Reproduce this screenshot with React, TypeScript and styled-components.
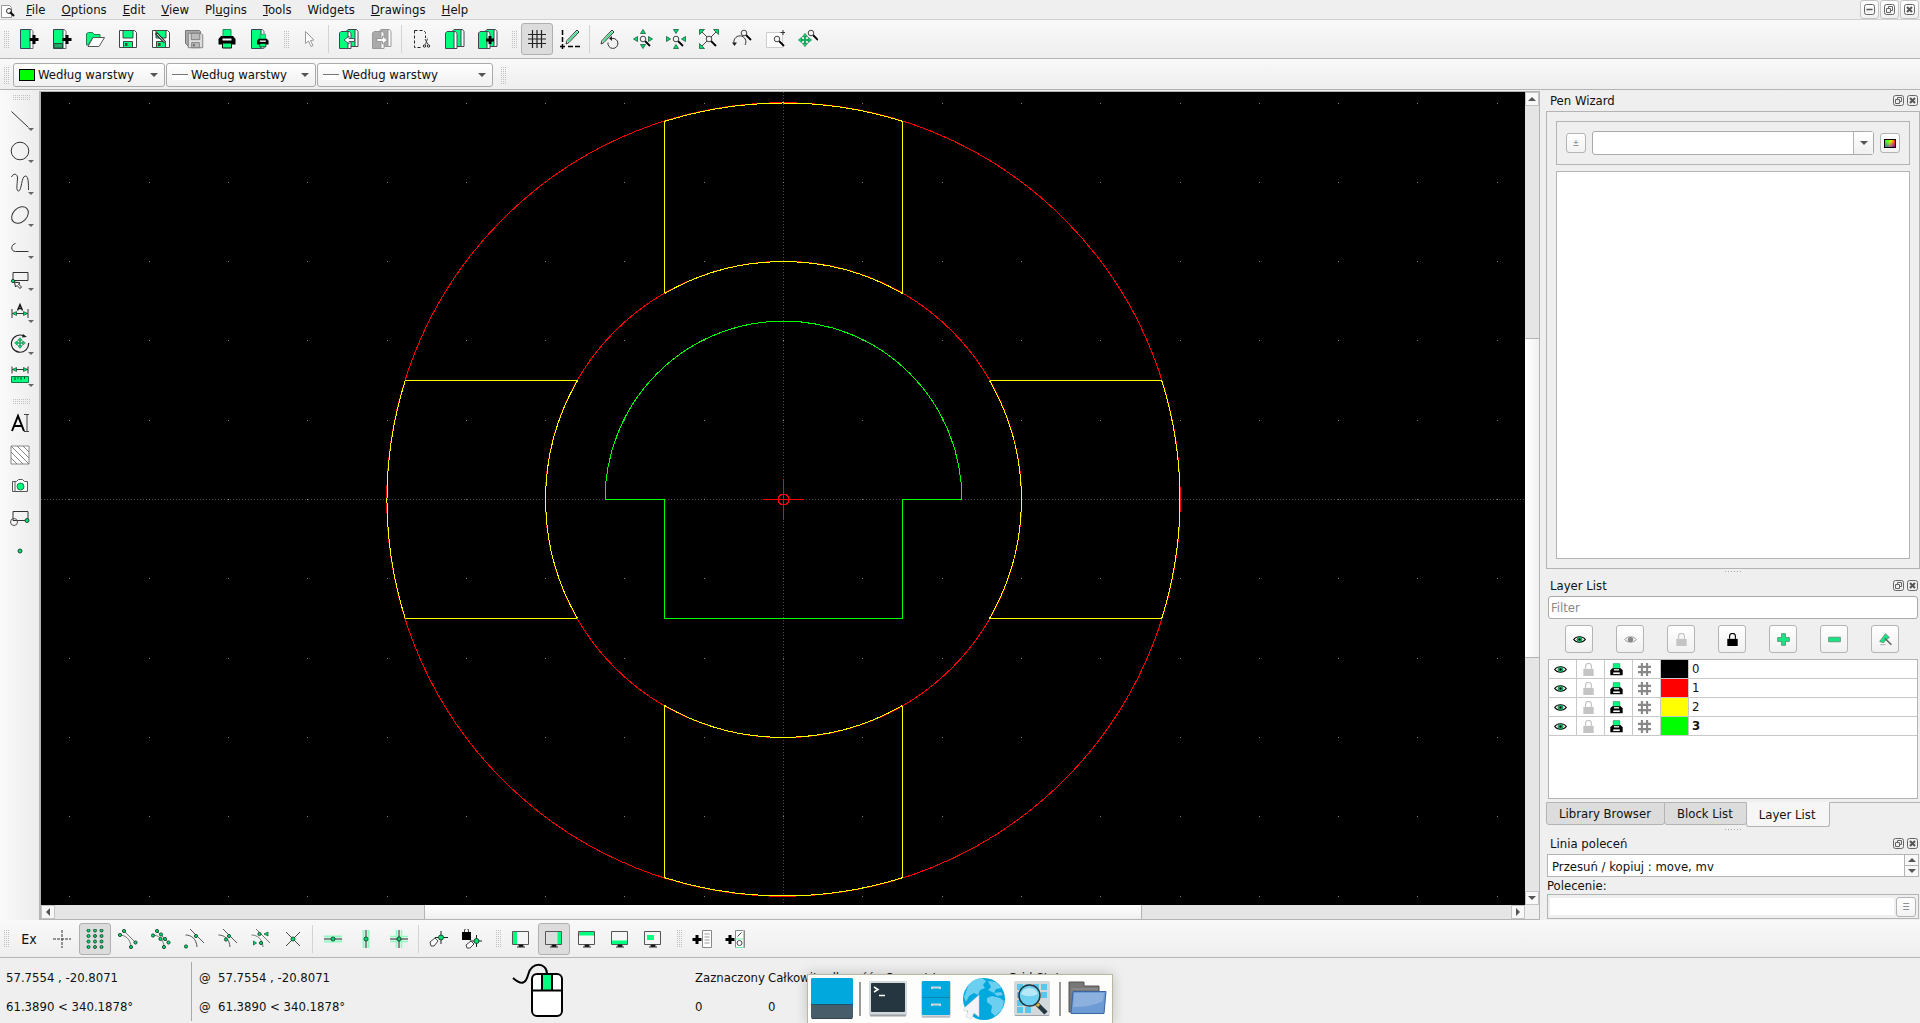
import React from 'react';
import styled, { createGlobalStyle, css } from 'styled-components';

const GREEN = '#00ff7f';
const LINE = '#b4b4b4';
const INK = '#333';

const GlobalStyle = createGlobalStyle`
  * { box-sizing: border-box; }
  body {
    margin: 0;
    background: #efefef;
    color: #111;
    font: 13px/16px "DejaVu Sans Condensed", "DejaVu Sans", sans-serif;
  }
  button, input, select, textarea { font: inherit; color: inherit; margin: 0; }
`;

/* ---------- icons ---------- */

const Svg = styled.svg<{ $s?: number }>`
  display: block;
  flex: none;
  width: ${p => p.$s ?? 20}px;
  height: ${p => p.$s ?? 20}px;
  fill: none;
`;

const Dot = ({ x, y, r = 1.6 }: { x: number; y: number; r?: number }) => (
  <circle cx={x} cy={y} r={r} fill="#00e070" stroke="#14402a" strokeWidth="0.9" />
);

const Tri = ({ d }: { d: string }) => <path d={d} fill="#00e070" stroke="#1d5c3c" strokeWidth="0.8" />;

const Loupe = ({ x, y }: { x: number; y: number }) => (
  <g>
    <path d={`M${x + 2} ${y + 2}l5 5`} stroke="#000" strokeWidth="1.8" />
    <circle cx={x} cy={y} r="2.8" fill="#f4f4f4" stroke="#444" />
  </g>
);

const Floppy = ({ main, page, ink }: { main: string; page: string; ink: string }) => (
  <g>
    <path d="M1.5 1.5h15l2 2v15h-17z" fill={page} stroke={ink} />
    <path d="M5 1.5h10V9H5z" fill={main} stroke={ink} />
    <path d="M5.5 12.5h9v6h-9z" fill={main} stroke={ink} />
    <path d="M7 14h2.5v3H7z" fill={ink} />
  </g>
);

const Book = ({ x, y, main = GREEN, ink = '#445' }: { x: number; y: number; main?: string; ink?: string }) => (
  <g transform={`translate(${x} ${y})`}>
    <path d="M7 .5h3.5l1.5 2v15H8z" fill="#fff" stroke={ink} />
    <path d="M.5 2l1.5-1.500h7v17H.5z" fill={main} stroke={ink} />
  </g>
);

const WideBook = () => (
  <g>
    <path d="M9 .5h3.500l1.500 2v17H10z" fill="#fff" stroke="#667" />
    <path d="M1.500.5h9.500v19h-9.500z" fill={GREEN} stroke="#345" />
  </g>
);

const Printer = () => (
  <g>
    <path d="M6 .5h8V8H6z" fill={GREEN} stroke="#1f8d59" />
    <path d="M4 7h12l2.500 3v5.500h-17V10z" fill="#000" />
    <path d="M5.500 10.500h9" stroke="#fff" strokeWidth="2" />
    <path d="M5.500 14h9v5h-9z" fill={GREEN} stroke="#000" />
  </g>
);

const Pencil = () => (
  <g>
    <path d="M6 15l1-3.500L17 1l2 2L9 13.500z" fill="#fff" stroke={INK} />
    <path d="M8 12.500L17.500 2.500" stroke="#3be08a" strokeWidth="1.600" />
  </g>
);

const Monitor = ({ children, bg = '#f6f6f6' }: { children: React.ReactNode; bg?: string }) => (
  <g>
    <path d="M1.500 2.500h16v13h-16z" fill={bg} stroke="#555" />
    {children}
    <path d="M8 16h4v1.500H8zM6 18h8" fill="#000" stroke="#222" />
  </g>
);

const Plus = ({ x, y, s = 4 }: { x: number; y: number; s?: number }) => (
  <path d={`M${x - s} ${y}h${2 * s}M${x} ${y - s}v${2 * s}`} stroke="#000" strokeWidth="3" />
);

const MoveCross = ({ x, y, s }: { x: number; y: number; s: number }) => (
  <g transform={`translate(${x} ${y}) scale(${s})`}>
    <path d="M0 -4V4M-4 0H4" stroke="#1fa865" strokeWidth="1.800" />
    <path d="M0 -6L2.400 -3H-2.400zM0 6L2.400 3H-2.400zM-6 0L-3 2.400V-2.400zM6 0L3 2.400V-2.400z" fill="#12d873" stroke="#17774a" strokeWidth="0.600" />
  </g>
);

const ICONS: Record<string, React.ReactNode> = {
  new: <><WideBook /><Plus x={15} y={10.5} s={4.5} /></>,
  newTemplate: <><WideBook /><path d="M2 14.500h8.500v4.500H2z" fill="#22a866" stroke="#2b4a3c" /><Plus x={15} y={10.5} s={4.5} /></>,
  open: <><path d="M1.500 16V4.500l2-1h4l1.500 2h6V9H7.500L3 16z" fill={GREEN} stroke="#2a7a52" /><path d="M8 8.500h11.500L14 17.500H3z" fill="#fff" stroke="#555" /></>,
  save: <Floppy main={GREEN} page="#fff" ink="#444" />,
  saveAs: <><Floppy main={GREEN} page="#fff" ink="#444" /><path d="M5 4l9 9.500" stroke="#333" strokeWidth="3" /><path d="M6 5l8 8.500" stroke="#ddd" /></>,
  saveAll: <><path d="M1.500 1.500h14l1 1v15h-12l-3-3z" fill="#aaa" stroke="#777" /><g transform="translate(3 3) scale(.85)"><Floppy main="#bbb" page="#ddd" ink="#777" /></g></>,
  print: <Printer />,
  printPreview: <><WideBook /><g transform="translate(6 5) scale(.68)"><Printer /></g></>,
  pointer: <path d="M6.500 2.500v12l3-2.500 2.500 5.500 2-1-2.500-5 3.500-.5z" fill="#fff" stroke="#999" />,
  undo: <><Book x={7} y={0} /><Book x={0} y={2} /><path d="M5 11l5-4v2.500h5.500v3H10V15z" fill="#fff" stroke="#456" /></>,
  redo: <><Book x={7} y={0} main="#aaa" ink="#999" /><Book x={0} y={2} main="#aaa" ink="#999" /><path d="M15.500 11l-5-4v2.500H5v3h5.500V15z" fill="#fff" stroke="#999" /></>,
  cut: <><path d="M2.500 1.500h9l2 2V9M2.500 1.500v17h8" stroke="#222" strokeDasharray="3 2" /><path d="M15.500 9.500l-2 6M13 10l3 5.500" stroke="#444" /><circle cx="12.500" cy="17" r="1.200" stroke="#222" /><circle cx="16.500" cy="17" r="1.200" stroke="#222" /></>,
  copy: <><Book x={7} y={0} /><Book x={0} y={2} /></>,
  paste: <><Book x={7} y={0} /><Book x={0} y={2} /><Plus x={12} y={11} /></>,
  grid: <path d="M5.500 1v18M10 1v18M14.500 1v18M1 5.500h18M1 10h18M1 14.500h18" stroke="#222" strokeWidth="1.200" />,
  draft: <><path d="M2.500 1v13" stroke="#000" strokeWidth="1.500" strokeDasharray="5 2" /><path d="M0 17.500h5M2.500 15v5M8 17.500h12" stroke="#000" strokeWidth="1.500" strokeDasharray="5 2" /><Pencil /></>,
  redraw: <><g transform="translate(-5 0)"><Pencil /></g><path d="M12 9.500a5 5 0 1 1-4 4" stroke="#333" /><path d="M12 7v5l-3-2.500z" fill="#222" /></>,
  zoomIn: <><Tri d="M10 .5l2.500 4h-5z" /><Tri d="M10 19.500l2.500-4h-5z" /><Tri d="M.5 10l4-2.500v5z" /><Tri d="M19.500 10l-4-2.500v5z" /><Loupe x={10} y={10} /></>,
  zoomOut: <><Tri d="M10 4.500l2.500-4h-5z" /><Tri d="M10 15.500l2.500 4h-5z" /><Tri d="M4.500 10l-4-2.500v5z" /><Tri d="M15.500 10l4-2.500v5z" /><Loupe x={10} y={10} /></>,
  zoomAuto: <><path d="M3 3l7 7M17 3L3 17" stroke="#444" /><Tri d="M.5.5h5l-5 5z" /><Tri d="M19.500.5h-5l5 5z" /><Tri d="M.5 19.500v-5l5 5z" /><Loupe x={10} y={10} /></>,
  zoomPrev: <><path d="M2.500 15.500A6 6 0 1 1 13 16" stroke="#333" /><path d="M0 13.500h5L2.500 17z" fill="#222" /><Loupe x={12} y={4} /></>,
  zoomWindow: <><path d="M1.500 3.500h16v15h-16z" fill="#fff" stroke="#ccc" /><path d="M18 1v5M15.500 3.500h5" stroke="#333" /><Loupe x={12} y={10} /></>,
  zoomPan: <><MoveCross x={7} y={11} s={1.1} /><Loupe x={13} y={4} /></>,
  line: <path d="M1.500 2.500l17 16" stroke={INK} />,
  circle: <circle cx="10" cy="10" r="8.800" stroke={INK} />,
  curve: <path d="M1.500 4C3 0 8 0 7.500 6 7 12 6 18 8.500 18 12 18 11 3 15.500 3c3 0 3 8 3 14" stroke={INK} />,
  ellipse: <ellipse cx="10" cy="10" rx="9.500" ry="7" transform="rotate(-45 10 10)" stroke={INK} />,
  polyline: <path d="M5.500 6.500c-5 1-5 8 0 8h13" stroke={INK} />,
  select: <><path d="M3 3.500h15v8H3z" stroke={INK} /><Dot x={3} y={12} /><path d="M4.500 13l1 5 1.500-1.500 3 3 1.500-1.500-3-3 1.500-1z" fill="#fff" stroke="#222" /></>,
  dimension: <><path d="M2 8v9M18 8v9M2 12.500h16" stroke={INK} /><Tri d="M2.500 12.500l4-2v4z" /><Tri d="M17.500 12.500l-4-2v4z" /><path d="M7.500 9.500L10 3.500l2.500 6M8.500 7.500h3" stroke="#111" strokeWidth="1.400" /></>,
  modify: <><path d="M18.600 10A8.600 8.600 0 1 1 14 3" stroke="#222" strokeWidth="1.200" /><path d="M13 1l4 3-5 .5z" fill="#222" /><MoveCross x={10} y={10} s={0.9} /></>,
  measure: <><path d="M2 1.500v7M18 1.500v7M2 4.500h16" stroke={INK} /><Tri d="M2.500 4.500l4-2v4z" /><Tri d="M17.500 4.500l-4-2v4z" /><path d="M1.500 11.500h17v6h-17z" fill={GREEN} stroke="#117744" /><path d="M5 12v3M8 12v2M11 12v3M14.500 12v2" stroke="#0a4a2a" /></>,
  text: <><path d="M2 18L8 3l6 15M4 13h8" stroke="#000" strokeWidth="2" /><path d="M17 2v16M14 1.500h5M14 18.500h5" stroke="#444" /></>,
  hatch: <><path d="M1 1h18v18H1z" fill="#fff" stroke="#888" /><path d="M1 13l6 6M1 7l12 12M1 1l18 18M7 1l12 12M13 1l6 6" stroke="#777" strokeWidth=".9" /></>,
  image: <><path d="M2.500 4.500h4l2-2h4l2 2h3v10h-15zM5 4v10" fill="#fff" stroke="#555" /><circle cx="10.500" cy="9.500" r="3.500" fill={GREEN} stroke="#1b7a4b" /></>,
  block: <><path d="M3 2.500h15v9H3z" stroke={INK} /><circle cx="4" cy="13" r="3.500" stroke="#555" /><Dot x={17} y={11.5} r={2} /></>,
  point: <Dot x={10} y={10} r={2} />,
  snapFree: <path d="M10 1v18M1 10h18" stroke="#333" strokeDasharray="3 1" />,
  snapGrid: <>{[3.5, 10, 16.5].map(x => [1.5, 7, 12.5, 18].map(y => <Dot key={`${x}-${y}`} x={x} y={y} r={1.5} />))}</>,
  snapEnd: <><path d="M1.500 6c6 0 11 4 11.500 12M6 2l11 11" stroke="#777" /><Dot x={2} y={6} /><Dot x={6} y={2} /><Dot x={17.5} y={13.5} /><Dot x={13} y={18} /></>,
  snapEntity: <><path d="M1.500 6c6 0 11 4 11.500 12M6 2l11 11" stroke="#777" /><Dot x={2} y={6.5} /><Dot x={6} y={2} /><Dot x={10} y={5.5} /><Dot x={9.5} y={10} /><Dot x={14} y={10} /><Dot x={17.5} y={13.5} /><Dot x={13} y={18} /></>,
  snapCenter: <><path d="M1.500 6c6 0 11 4 11.500 12M6 0l14 14" stroke="#555" /><Dot x={12} y={7} /><Dot x={2} y={17.5} /></>,
  snapMiddle: <><path d="M1.500 6c6 0 11 4 11.500 12M6 0l14 14" stroke="#555" /><Dot x={12} y={7} /><Dot x={9} y={10.5} /></>,
  snapDist: <><path d="M1.500 6c6 0 11 4 11.500 12M6 0l14 14" stroke="#777" /><Dot x={9.5} y={5} /><Dot x={11} y={14} /><Tri d="M14 5l4-2v4z" /><Tri d="M6.500 14l-3-2v4z" /></>,
  snapCross: <><path d="M3 3l14 14M17 3L3 17" stroke="#444" /><Dot x={10} y={10} r={2} /></>,
  restrictH: <><path d="M1 7.500h18M1 12.500h18" stroke="#8dfac0" strokeWidth="2" /><path d="M1 10h18" stroke="#222" /><Dot x={10} y={10} r={2} /></>,
  restrictV: <><path d="M7.500 1v18M12.500 1v18" stroke="#8dfac0" strokeWidth="2" /><path d="M10 1v18" stroke="#222" /><Dot x={10} y={10} r={2} /></>,
  restrictO: <><path d="M7.500 1v18M12.500 1v18M1 7.500h18M1 12.500h18" stroke="#8dfac0" strokeWidth="1.500" /><path d="M10 1v18M1 10h18" stroke="#222" /><Dot x={10} y={10} r={2} /></>,
  relZero: <><path d="M12 2v13M6 8.500h13" stroke="#222" /><Dot x={12} y={8.5} r={2.5} /><path d="M1 13l5-4 3 3-4 5H2z" fill="#fff" stroke="#444" /></>,
  lockZero: <><path d="M0 3h9v8H0z" fill="#000" /><path d="M2.500 3V1.500a2 2 0 0 1 4 0V3" stroke="#333" /><path d="M14.500 6v12M8 12h13" stroke="#222" /><Dot x={14.5} y={12} r={2.5} /><path d="M4 16l5-4 3 3-4 4H5z" fill="#fff" stroke="#444" /></>,
  dockLeft: <Monitor><path d="M2 3h4v12H2z" fill={GREEN} /></Monitor>,
  dockRight: <Monitor bg="#ddd"><path d="M13.500 3h3.500v12h-3.500z" fill={GREEN} /></Monitor>,
  dockTop: <Monitor><path d="M2 3h15v3.500H2z" fill={GREEN} /></Monitor>,
  dockBottom: <Monitor><path d="M2 11.500h15V15H2z" fill={GREEN} /></Monitor>,
  dockFloat: <Monitor><path d="M4 6h7v5H4z" fill={GREEN} /></Monitor>,
  addMenu: <><Plus x={5} y={10.5} s={4.5} /><path d="M10.500 1.500h9v17h-9z" fill="#fff" stroke="#888" /><path d="M12.500 5h5M12.500 8h5M12.500 11h5M12.500 14h5" stroke="#999" /></>,
  addToolbar: <><Plus x={5} y={10.5} s={4.5} /><path d="M10.500 1.500h9v17h-9z" fill="#fff" stroke="#888" /><path d="M18.500 1v17.500h-8M10 10h9" stroke="#6cf2a9" /><path d="M12.500 7.500l4-4" stroke="#444" /><circle cx="14.500" cy="14" r="2.500" stroke="#444" /></>,
  eye: <><path d="M1 10c4-5.500 14-5.500 18 0-4 5.500-14 5.500-18 0z" fill="#fff" stroke="#000" strokeWidth="1.700" /><circle cx="10" cy="10" r="4" fill="#12d873" stroke="#0a5a33" /><circle cx="10" cy="10" r="1.800" fill="#000" /></>,
  eyeOff: <><path d="M1 10c4-5.500 14-5.500 18 0-4 5.500-14 5.500-18 0z" fill="#eee" stroke="#999" strokeWidth="1.500" /><circle cx="10" cy="10" r="4" fill="#888" /></>,
  unlock: <><path d="M2 9h16v11H2z" fill="#c4c4c4" /><path d="M5.500 9V5a4.500 4.500 0 0 1 9 0v4" stroke="#c4c4c4" strokeWidth="1.800" /></>,
  lock: <><path d="M2 9h16v11H2z" fill="#000" /><path d="M5.500 9V5a4.500 4.500 0 0 1 9 0v4" stroke="#000" strokeWidth="1.800" /></>,
  plus: <path d="M7 1h6v6h6v6h-6v6H7v-6H1V7h6z" fill="#16e682" stroke="#5d9c7c" strokeWidth="1.500" />,
  minus: <path d="M1 6.500h18v7H1z" fill="#16e682" stroke="#5d9c7c" strokeWidth="1.500" />,
  edit: <><path d="M1 13L10 1l6 6-6 4-3 4z" fill="#16e682" stroke="#4c7a63" /><path d="M9 8l10 10" stroke="#666" strokeWidth="2.500" /><path d="M2 18h8" stroke="#888" /></>,
  hash: <path d="M6 0v20M14 0v20M0 6h20M0 14h20" stroke="#888" strokeWidth="3.200" />,
  tinyPrint: <><path d="M5 1h10v9H5z" fill={GREEN} stroke="#1f8d59" /><path d="M3.500 8h13l3 3v8H.5v-8z" fill="#000" /><path d="M6 10.500h8" stroke="#fff" strokeWidth="2" /><path d="M5 14.500h10V17H5z" fill="#fff" /></>,
};

const Icon = ({ name, size }: { name: string; size?: number }) => (
  <Svg viewBox="0 0 20 20" $s={size} aria-hidden="true">{ICONS[name]}</Svg>
);

const Arrow = ({ dir = 'down' }: { dir?: 'up' | 'down' | 'left' | 'right' }) => {
  const paths = { up: 'M0 6l4-4 4 4z', down: 'M0 2h8L4 6z', left: 'M6 0v8L2 4z', right: 'M2 0v8l4-4z' };
  return <Svg viewBox="0 0 8 8" $s={8} aria-hidden="true"><path d={paths[dir]} fill="#555" /></Svg>;
};

/* ---------- window frame ---------- */

const Window = styled.div`
  display: flex;
  flex-direction: column;
  height: 100vh;
  overflow: hidden;
`;

const MenuBar = styled.nav`
  display: flex;
  align-items: center;
  height: 20px;
  flex: none;
  border-bottom: 1px solid #d0d0d0;
`;

const MenuItem = styled.button`
  border: 0;
  background: none;
  padding: 0 8px;
  height: 19px;
`;

const MenuLogo = styled.div`
  width: 18px;
`;

const WindowButtons = styled.div`
  display: flex;
  gap: 1px;
  margin-left: auto;
  padding-right: 1px;
`;

const WindowButton = styled.button`
  display: grid;
  place-items: center;
  width: 19px;
  height: 19px;
  padding: 0;
  border: 1px solid #c4c4c4;
  border-radius: 3px;
  background: linear-gradient(#fff, #f0f0f0);
`;

const ToolBar = styled.div<{ $h: number }>`
  display: flex;
  align-items: center;
  gap: 4px;
  height: ${p => p.$h}px;
  flex: none;
  background: linear-gradient(#f9f9f9, #eeeeee);
  border-bottom: 1px solid ${LINE};
`;

const PenBar = styled(ToolBar)`
  padding-top: 2px;
`;

const Group = styled.div`
  display: flex;
  align-items: center;
  gap: 1px;
`;

const Handle = styled.span<{ $across?: boolean }>`
  flex: none;
  width: ${p => (p.$across ? 17 : 5)}px;
  height: ${p => (p.$across ? 5 : 17)}px;
  margin: ${p => (p.$across ? '4px auto 3px 13px' : '0 3px 0 4px')};
  background: conic-gradient(transparent 75%, #c0c0c0 0) 0 0 / 2px 2px;
`;

const ToolButton = styled.button<{ $on?: boolean }>`
  position: relative;
  display: grid;
  place-items: center;
  width: 32px;
  height: 32px;
  padding: 0;
  flex: none;
  border: 1px solid ${p => (p.$on ? '#b0b0b0' : 'transparent')};
  border-radius: 3px;
  background: ${p => (p.$on ? '#dcdcdc' : 'none')};
  font-size: 14px;
`;

const Separator = styled.span`
  width: 1px;
  height: 28px;
  margin: 0 3px 0 2px;
  background: #d4d4d4;
`;

const Combo = styled.label<{ $w?: number }>`
  position: relative;
  display: flex;
  align-items: center;
  height: 24px;
  ${p => (p.$w ? css`width: ${p.$w}px;` : css`flex: 1;`)}
`;

const ComboSelect = styled.select<{ $plain?: boolean }>`
  appearance: none;
  width: 100%;
  height: 24px;
  padding: 0 24px 0 24px;
  border: 1px solid #aaa;
  border-radius: 3px;
  background: ${p => (p.$plain ? '#fff' : 'linear-gradient(#fff, #f0f0f0)')};
`;

const ComboMark = styled.span<{ $line?: boolean }>`
  position: absolute;
  left: 6px;
  width: 16px;
  pointer-events: none;
  ${p => (p.$line
    ? css`height: 6px; border-top: 1px solid #777; background: #fff; top: 11px;`
    : css`height: 12px; border: 1px solid #000; background: #00ff00;`)}
`;

const ComboArrow = styled.span<{ $boxed?: boolean }>`
  position: absolute;
  top: 1px;
  right: 1px;
  display: grid;
  place-items: center;
  width: 20px;
  height: 22px;
  pointer-events: none;
  ${p => p.$boxed && css`
    border-left: 1px solid ${LINE};
    background: linear-gradient(#fff, #f0f0f0);
  `}
`;

const Body = styled.div`
  display: flex;
  flex: 1;
  min-height: 0;
`;

const SideBar = styled.div`
  display: flex;
  flex-direction: column;
  width: 39px;
  flex: none;
  padding-top: 1px;
  background: linear-gradient(90deg, #fafafa, #ececec);
`;

const SideGroup = styled.div`
  display: flex;
  flex-direction: column;
  padding-bottom: 4px;

  & > button { margin-left: 4px; }
`;

const MenuTick = styled.span`
  position: absolute;
  right: 1px;
  bottom: 3px;
  width: 6px;
  height: 3px;
  background: #666;
  clip-path: polygon(0 0, 100% 0, 50% 100%);
`;

/* ---------- drawing view ---------- */

const ViewFrame = styled.main`
  display: grid;
  grid-template: minmax(0, 1fr) 14px / minmax(0, 1fr) 14px;
  flex: 1;
  min-width: 0;
  margin-top: 1px;
  border: solid ${LINE};
  border-width: 1px 1px 1px 2px;
`;

const Canvas = styled.svg`
  display: block;
  width: 100%;
  height: 100%;
  background: #000;
  fill: none;
  shape-rendering: crispEdges;
`;

const ScrollBar = styled.div<{ $v?: boolean }>`
  display: flex;
  flex-direction: ${p => (p.$v ? 'column' : 'row')};
  background: #e5e5e5;
`;

const ScrollStep = styled.button`
  display: grid;
  place-items: center;
  width: 14px;
  height: 14px;
  padding: 0;
  border: 0;
  outline: 1px solid #c4c4c4;
  outline-offset: -1px;
  background: #f8f8f8;
`;

const Stretch = styled.span<{ $n: number }>`
  flex: ${p => p.$n} 0 0;
`;

const Thumb = styled(Stretch)<{ $v?: boolean }>`
  border: solid ${LINE};
  border-width: ${p => (p.$v ? '1px 0' : '0 1px')};
  background: linear-gradient(${p => (p.$v ? '90deg' : '180deg')}, #fff, #f0f0f0);
`;

const PITCH = 79.3;
const span = (n: number) => Array.from({ length: 2 * n + 1 }, (_, i) => i - n);

const Drawing = () => {
  const R = 5 * PITCH;
  const r = 3 * PITCH;
  const g = 2.25 * PITCH;
  const h = 1.5 * PITCH;
  const outer = Math.sqrt(R * R - h * h);
  const inner = Math.sqrt(r * r - h * h);
  const blade = `M${-h} ${-inner}V${-outer}A${R} ${R} 0 0 1 ${h} ${-outer}V${-inner}A${r} ${r} 0 0 0 ${-h} ${-inner}`;
  return (
    <Canvas viewBox="-742.5 -407.5 1484 813" preserveAspectRatio="xMidYMid slice" role="img" aria-label="Drawing">
      <path d="M-742.500 0H742M0 -407.500V406" stroke="#4a4a4a" strokeDasharray="1 2" />
      {span(9).map(i => span(5).map(j => (
        <rect key={`${i},${j}`} x={Math.round(i * PITCH) - 0.5} y={Math.round(j * PITCH) - 0.5} width="1" height="1" fill="#808080" />
      )))}
      <circle r={R + 0.3} stroke="#f00" />
      <circle r={r + 0.3} stroke="#f00" />
      {[0, 90, 180, 270].map(a => <path key={a} d={blade} transform={`rotate(${a})`} stroke="#ff0" />)}
      <path d={`M${-g} 0A${g} ${g} 0 0 1 ${g} 0H${h}V${h}H${-h}V0z`} stroke="#0f0" />
      <path d="M-20.500 0H20.500M0 -20.500V20.500" stroke="#f00" />
      <circle r="5.500" stroke="#f00" />
    </Canvas>
  );
};

/* ---------- right docks ---------- */

const Docks = styled.aside`
  display: flex;
  flex-direction: column;
  width: 380px;
  flex: none;
  padding-left: 6px;
`;

const DockTitle = styled.header`
  display: flex;
  align-items: center;
  gap: 3px;
  height: 21px;
  flex: none;
  padding: 0 2px 0 4px;
`;

const DockName = styled.h2`
  flex: 1;
  margin: 0;
  font: inherit;
`;

const BareButton = styled.button`
  padding: 0;
  border: 0;
  background: none;
`;

const PenFrame = styled.section`
  display: flex;
  flex-direction: column;
  gap: 6px;
  flex: 1;
  min-height: 0;
  padding: 9px;
  border: 1px solid ${LINE};
`;

const PenRow = styled.div`
  display: flex;
  align-items: center;
  gap: 6px;
  height: 44px;
  padding: 0 9px;
  border: 1px solid ${LINE};
`;

const SmallButton = styled.button`
  display: grid;
  place-items: center;
  width: 20px;
  height: 20px;
  padding: 0;
  border: 1px solid ${LINE};
  border-radius: 3px;
  background: linear-gradient(#fff, #f2f2f2);
  color: #777;
  font-size: 9px;
  line-height: 10px;
`;

const ColorSwatch = styled.span`
  width: 12px;
  height: 9px;
  border: 1px solid #000;
  background:
    linear-gradient(transparent 20%, #40f8 100%),
    linear-gradient(100deg, #0f4, #bf0 45%, #fc0 60%, #f02);
`;

const PenList = styled.div`
  flex: 1;
  border: 1px solid ${LINE};
  background: #fff;
`;

const Splitter = styled.div`
  height: 6px;
  flex: none;
  padding-top: 2px;

  &::before {
    content: "";
    display: block;
    width: 16px;
    height: 1px;
    margin: 0 auto;
    background: linear-gradient(90deg, #aaa 1px, transparent 1px) 0 0 / 3px 1px;
  }
`;

const LayerPanel = styled.section`
  padding: 0 2px;
`;

const FilterInput = styled.input`
  display: block;
  width: 100%;
  height: 23px;
  padding: 0 2px;
  border: 1px solid #aaa;
  border-radius: 3px;
  background: #fff;

  &::placeholder { color: #888; }
`;

const LayerButtons = styled.div`
  display: flex;
  gap: 23px;
  padding: 6px 17px;
`;

const LayerButton = styled.button`
  display: grid;
  place-items: center;
  width: 28px;
  height: 28px;
  padding: 0;
  border: 1px solid ${LINE};
  border-radius: 3px;
  background: linear-gradient(#fff, #f0f0f0);
`;

const LayerBox = styled.div`
  height: 140px;
  border: 1px solid ${LINE};
  background: #fff;
`;

const LayerTable = styled.table`
  width: 100%;
  border-spacing: 0;
  table-layout: fixed;
`;

const LayerCell = styled.td<{ $fill?: string }>`
  width: 28px;
  height: 19px;
  padding: 0 0 0 5px;
  border: solid #c8c8c8;
  border-width: 0 1px 1px 0;
  background: ${p => p.$fill ?? 'none'};
`;

const LayerName = styled.td<{ $active: boolean }>`
  height: 19px;
  padding: 0 3px;
  border-bottom: 1px solid #c8c8c8;
  font-weight: ${p => (p.$active ? 'bold' : 'normal')};
`;

const Tabs = styled.div`
  display: flex;
  align-items: flex-start;
  height: 25px;
  flex: none;
  margin-top: 3px;
`;

const Tab = styled.button<{ $on?: boolean }>`
  height: ${p => (p.$on ? 25 : 23)}px;
  padding: 0 13px 0 12px;
  border: 1px solid ${LINE};
  border-top-color: ${p => (p.$on ? '#f6f6f6' : LINE)};
  border-radius: 0 0 3px 3px;
  background: ${p => (p.$on ? '#f6f6f6' : '#dcdcdc')};

  & + & { margin-left: -1px; }
`;

const TabRest = styled.span`
  flex: 1;
  border-top: 1px solid ${LINE};
`;

const CommandLog = styled.div`
  display: flex;
  height: 23px;
  margin: 0 1px;
  border: 1px solid ${LINE};
  background: #fff;
`;

const LogText = styled.textarea`
  flex: 1;
  height: 21px;
  padding: 4px 4px 0;
  border: 0;
  background: none;
  resize: none;
  overflow: hidden;
`;

const LogSteps = styled.div`
  display: flex;
  flex-direction: column;
  width: 14px;
  border-left: 1px solid ${LINE};
`;

const LogStep = styled.button`
  display: grid;
  place-items: center;
  flex: 1;
  min-height: 0;
  padding: 0;
  border: 0;
  background: #f8f8f8;

  & + & { border-top: 1px solid ${LINE}; }
`;

const CommandLabel = styled.label`
  height: 17px;
  padding: 1px 0 0 1px;
`;

const CommandRow = styled.div`
  display: flex;
  align-items: center;
  gap: 2px;
  height: 25px;
  margin: 0 1px 1px;
  padding: 0 2px;
  border: 1px solid ${LINE};
`;

const CommandInput = styled.input`
  flex: 1;
  min-width: 0;
  height: 17px;
  padding: 0 4px;
  border: 0;
  background: #fff;
`;

/* ---------- status bar ---------- */

const StatusBar = styled.footer`
  display: flex;
  height: 65px;
  flex: none;
  padding: 4px 0 2px 6px;
`;

const Readout = styled.div<{ $w: number }>`
  display: grid;
  grid-template-rows: 29px 29px;
  align-items: center;
  width: ${p => p.$w}px;
  padding-top: 1px;
  flex: none;
  white-space: pre;
`;

const StatusRule = styled.span`
  width: 1px;
  margin-right: 7px;
  background: #aaa;
`;

const MouseHint = styled.svg`
  width: 56px;
  height: 56px;
  margin: 1px 128px 0 0;
  fill: none;
`;

/* ---------- desktop launcher ---------- */

const Launcher = styled.div`
  position: fixed;
  left: 50%;
  bottom: -1px;
  transform: translateX(-50%);
  display: flex;
  align-items: flex-start;
  gap: 6px;
  height: 50px;
  padding: 3px;
  border: 1px solid #b9b7a0;
  background: #fdfdfb;
  box-shadow: 0 0 12px rgba(0, 0, 0, 0.2);
`;

const LauncherRule = styled.span`
  width: 2px;
  height: 34px;
  margin-top: 4px;
  background: #999;
`;

const Launch = ({ label, children }: { label: string; children: React.ReactNode }) => (
  <BareButton aria-label={label}><Svg viewBox="0 0 42 42" $s={42}>{children}</Svg></BareButton>
);

/* ---------- composition ---------- */

const MENUS: [string, string, string][] = [
  ['', 'F', 'ile'], ['', 'O', 'ptions'], ['', 'E', 'dit'], ['', 'V', 'iew'], ['Pl', 'u', 'gins'],
  ['', 'T', 'ools'], ['Widgets', '', ''], ['', 'D', 'rawings'], ['', 'H', 'elp'],
];

const TOP_TOOLS = [
  ['new', 'newTemplate', 'open', 'save', 'saveAs', 'saveAll', 'print', 'printPreview'],
  ['pointer', '|', 'undo', 'redo', '|', 'cut', 'copy', 'paste'],
  ['grid', 'draft', '|', 'redraw', 'zoomIn', 'zoomOut', 'zoomAuto', 'zoomPrev', 'zoomWindow', 'zoomPan'],
];

const SNAP_TOOLS = [
  ['Ex', 'snapFree', 'snapGrid', 'snapEnd', 'snapEntity', 'snapCenter', 'snapMiddle', 'snapDist', 'snapCross', '|',
    'restrictH', 'restrictV', 'restrictO', '|', 'relZero', 'lockZero'],
  ['dockLeft', 'dockRight', 'dockTop', 'dockBottom', 'dockFloat'],
  ['addMenu', 'addToolbar'],
];

const PRESSED = ['grid', 'snapGrid', 'dockRight'];

const DRAW_TOOLS = ['line', 'circle', 'curve', 'ellipse', 'polyline', 'select', 'dimension', 'modify', 'measure'];
const INSERT_TOOLS = ['text', 'hatch', 'image', 'block', 'point'];

const LAYERS = [
  { name: '0', color: '#000000' },
  { name: '1', color: '#ff0000' },
  { name: '2', color: '#ffff00' },
  { name: '3', color: '#00ff00', active: true },
];

const ToolGroups = ({ groups }: { groups: string[][] }) => (
  <>
    {groups.map((tools, i) => (
      <Group key={i}>
        <Handle />
        {tools.map((t, j) => {
          if (t === '|') return <Separator key={j} />;
          if (t === 'Ex') return <ToolButton key={t}>Ex</ToolButton>;
          return <ToolButton key={t} aria-label={t} $on={PRESSED.includes(t)}><Icon name={t} /></ToolButton>;
        })}
      </Group>
    ))}
  </>
);

const FrameIcon = ({ kind }: { kind: 'min' | 'restore' | 'close' }) => (
  <Svg viewBox="0 0 11 11" $s={11} aria-hidden="true">
    <rect x=".5" y=".5" width="10" height="10" rx="2" stroke="#666" />
    {kind === 'min' && <path d="M2.500 5.500h6" stroke="#555" strokeWidth="1.500" />}
    {kind === 'restore' && <path d="M4.500 4V2.500h4v4H7M2.500 4.500h4v4h-4z" stroke="#666" />}
    {kind === 'close' && <path d="M3 3l5 5M8 3L3 8" stroke="#555" strokeWidth="2" />}
  </Svg>
);

const DockHeader = ({ title }: { title: string }) => (
  <DockTitle>
    <DockName>{title}</DockName>
    <BareButton aria-label="Float"><FrameIcon kind="restore" /></BareButton>
    <BareButton aria-label="Close"><FrameIcon kind="close" /></BareButton>
  </DockTitle>
);

const PenCombo = ({ label, width, line }: { label: string; width: number; line?: boolean }) => (
  <Combo $w={width}>
    <ComboSelect aria-label={label}><option>Według warstwy</option></ComboSelect>
    <ComboMark $line={line} />
    <ComboArrow><Arrow /></ComboArrow>
  </Combo>
);

export default function App() {
  return (
    <Window>
      <GlobalStyle />
      <MenuBar>
        <MenuLogo>
          <Svg viewBox="0 0 16 16" $s={16} aria-hidden="true">
            <path d="M1.500 3.500h8l2 2v10h-10z" fill="#fff" stroke="#999" />
            <circle cx="9" cy="9" r="2.500" stroke="#333" />
            <path d="M10 10l4 4" stroke="#111" strokeWidth="2.200" />
          </Svg>
        </MenuLogo>
        {MENUS.map(([a, b, c]) => <MenuItem key={a + b + c}>{a}{b && <u>{b}</u>}{c}</MenuItem>)}
        <WindowButtons>
          <WindowButton aria-label="Minimize"><FrameIcon kind="min" /></WindowButton>
          <WindowButton aria-label="Restore"><FrameIcon kind="restore" /></WindowButton>
          <WindowButton aria-label="Close"><FrameIcon kind="close" /></WindowButton>
        </WindowButtons>
      </MenuBar>

      <ToolBar $h={39}><ToolGroups groups={TOP_TOOLS} /></ToolBar>
      <PenBar $h={31}>
        <Group>
          <Handle />
          <PenCombo label="Color" width={152} />
          <PenCombo label="Width" width={150} line />
          <PenCombo label="Line type" width={176} line />
        </Group>
        <Handle />
      </PenBar>

      <Body>
        <SideBar>
          <SideGroup>
            <Handle $across />
            {DRAW_TOOLS.map(t => (
              <ToolButton key={t} aria-label={t}><Icon name={t} /><MenuTick /></ToolButton>
            ))}
          </SideGroup>
          <SideGroup>
            <Handle $across />
            {INSERT_TOOLS.map(t => <ToolButton key={t} aria-label={t}><Icon name={t} /></ToolButton>)}
          </SideGroup>
        </SideBar>

        <ViewFrame>
          <Drawing />
          <ScrollBar $v>
            <ScrollStep aria-label="Scroll up"><Arrow dir="up" /></ScrollStep>
            <Stretch $n={233} /><Thumb $v $n={318} /><Stretch $n={234} />
            <ScrollStep aria-label="Scroll down"><Arrow /></ScrollStep>
          </ScrollBar>
          <ScrollBar>
            <ScrollStep aria-label="Scroll left"><Arrow dir="left" /></ScrollStep>
            <Stretch $n={370} /><Thumb $n={716} /><Stretch $n={370} />
            <ScrollStep aria-label="Scroll right"><Arrow dir="right" /></ScrollStep>
          </ScrollBar>
        </ViewFrame>

        <Docks>
          <DockHeader title="Pen Wizard" />
          <PenFrame>
            <PenRow>
              <SmallButton aria-label="Add or remove">±</SmallButton>
              <Combo>
                <ComboSelect $plain aria-label="Pen color" />
                <ComboArrow $boxed><Arrow /></ComboArrow>
              </Combo>
              <SmallButton aria-label="Pick color"><ColorSwatch /></SmallButton>
            </PenRow>
            <PenList />
          </PenFrame>
          <Splitter />
          <DockHeader title="Layer List" />
          <LayerPanel>
            <FilterInput placeholder="Filter" aria-label="Filter" />
            <LayerButtons>
              {['eye', 'eyeOff', 'unlock', 'lock', 'plus', 'minus', 'edit'].map(n => (
                <LayerButton key={n} aria-label={n}><Icon name={n} size={13} /></LayerButton>
              ))}
            </LayerButtons>
            <LayerBox>
              <LayerTable>
                <colgroup>
                  <col width="28" /><col width="28" /><col width="28" /><col width="28" /><col width="28" /><col />
                </colgroup>
                <tbody>
                  {LAYERS.map(l => (
                    <tr key={l.name}>
                      {['eye', 'unlock', 'tinyPrint', 'hash'].map(n => (
                        <LayerCell key={n}><Icon name={n} size={13} /></LayerCell>
                      ))}
                      <LayerCell $fill={l.color} />
                      <LayerName $active={!!l.active}>{l.name}</LayerName>
                    </tr>
                  ))}
                </tbody>
              </LayerTable>
            </LayerBox>
          </LayerPanel>
          <Tabs role="tablist">
            <Tab role="tab">Library Browser</Tab>
            <Tab role="tab">Block List</Tab>
            <Tab role="tab" $on>Layer List</Tab>
            <TabRest />
          </Tabs>
          <Splitter />
          <DockHeader title="Linia poleceń" />
          <CommandLog>
            <LogText readOnly rows={1} aria-label="Command history" defaultValue="Przesuń / kopiuj : move, mv" />
            <LogSteps>
              <LogStep aria-label="Up"><Arrow dir="up" /></LogStep>
              <LogStep aria-label="Down"><Arrow /></LogStep>
            </LogSteps>
          </CommandLog>
          <CommandLabel htmlFor="command">Polecenie:</CommandLabel>
          <CommandRow>
            <CommandInput id="command" />
            <SmallButton aria-label="Options">☰</SmallButton>
          </CommandRow>
        </Docks>
      </Body>

      <ToolBar $h={38}><ToolGroups groups={SNAP_TOOLS} /></ToolBar>

      <StatusBar>
        <Readout $w={185}><span>57.7554 , -20.8071</span><span>61.3890 &lt; 340.1878°</span></Readout>
        <StatusRule />
        <Readout $w={19}><span>@</span><span>@</span></Readout>
        <Readout $w={293}><span>57.7554 , -20.8071</span><span>61.3890 &lt; 340.1878°</span></Readout>
        <MouseHint viewBox="0 0 56 56" aria-hidden="true">
          <path d="M2 15c9 8 13 5 15-3C20-2 36-1 36 11" stroke="#000" strokeWidth="2" />
          <rect x="21" y="11" width="30" height="42" rx="5" fill="#fff" stroke="#000" strokeWidth="2" />
          <path d="M31 12h10v15H31z" fill={GREEN} />
          <path d="M31 11v16M41 11v16M21 27.500h30" stroke="#000" strokeWidth="2" />
        </MouseHint>
        <Readout $w={73}><span>Zaznaczony</span><span>0</span></Readout>
        <Readout $w={117}><span>Całkowita długość</span><span>0</span></Readout>
        <Readout $w={123}><span>Current Layer</span></Readout>
        <Readout $w={123}><span>Grid Status</span></Readout>
      </StatusBar>

      <Launcher>
        <Launch label="Desktop">
          <rect x="0" y="0" width="42" height="41" rx="2" fill="#485d6a" />
          <path d="M0 2a2 2 0 0 1 2-2h38a2 2 0 0 1 2 2v24H0z" fill="#00a8de" />
          <path d="M0 26.500h42" stroke="#23506a" />
          <path d="M1 40.500h40" stroke="#33444f" />
        </Launch>
        <LauncherRule />
        <Launch label="Terminal">
          <rect x="2" y="3" width="38" height="35" rx="2" fill="#d3d8db" />
          <path d="M3 37.500h36" stroke="#9da3a8" strokeWidth="2" />
          <rect x="4" y="5" width="34" height="29" rx="1" fill="#263640" />
          <path d="M7 9l4 2.500L7 14M12 17.500h6" stroke="#fff" strokeWidth="1.500" />
        </Launch>
        <Launch label="Files">
          <rect x="6" y="3" width="30" height="36" rx="2" fill="#d0d6da" />
          <path d="M7 39h28" stroke="#9da3a8" />
          <rect x="7" y="3" width="28" height="34" rx="1" fill="#00a8de" />
          <path d="M7 19.500h28" stroke="#0683b0" />
          <path d="M17 11v-1.500h8V11M17 28v-1.500h8V28" stroke="#cdd5da" strokeWidth="2" />
        </Launch>
        <Launch label="Browser">
          <circle cx="21" cy="21" r="21" fill="#00a8de" />
          <path d="M5 8c4-6 10-8 14-8l4 3-3 4 2 3-5 2-2 5-4-2-5 3-3 6-2-5zM25 3l8 1 6 6-6 1-2 4-6-3 3-3zM24 20l5-2 8 2 4 3-2 9-7 6-4-4 1-6-5-4zM31 15l7-1 2 3-6 1z" fill="#6ccff0" />
          <path d="M16 17v22l-5-4-3 6-5-2 2-6-6-1z" fill="#f2f4f5" stroke="#c7d0d5" strokeWidth=".5" />
        </Launch>
        <Launch label="Search">
          <rect x="3" y="3" width="36" height="35" rx="2" fill="#d3d8db" />
          <path d="M4 37.500h34" stroke="#9da3a8" />
          <path d="M6 6h6v6H6zM14 6h6v6h-6zM22 6h6v6h-6zM30 6h6v6h-6zM6 14h6v6H6zM30 14h6v6h-6zM6 22h6v6H6zM6 29h6v6H6zM14 29h6v6h-6z" fill="#58c7ea" />
          <path d="M26 26l9 9" stroke="#263640" strokeWidth="4.500" />
          <path d="M25 25l3 3" stroke="#e8b73a" strokeWidth="3" />
          <circle cx="18.500" cy="17.500" r="10.500" fill="#6fd0ef" stroke="#263640" strokeWidth="1.500" />
          <path d="M10 16a9 9 0 0 1 17 0c-6 3-11 3-17 0z" fill="#b6e8f8" />
        </Launch>
        <LauncherRule />
        <Launch label="Folder">
          <path d="M2 4h15v4h15v26H2z" fill="#777" stroke="#555" />
          <path d="M4 11h27M4 14h27" stroke="#999" />
          <path d="M6 13.500h33l-2 22H4z" fill="#6d9bd3" stroke="#3a66a5" />
          <path d="M7 15h30l-1 8C26 28 16 29 6 29z" fill="#8db1de" />
        </Launch>
      </Launcher>
    </Window>
  );
}
